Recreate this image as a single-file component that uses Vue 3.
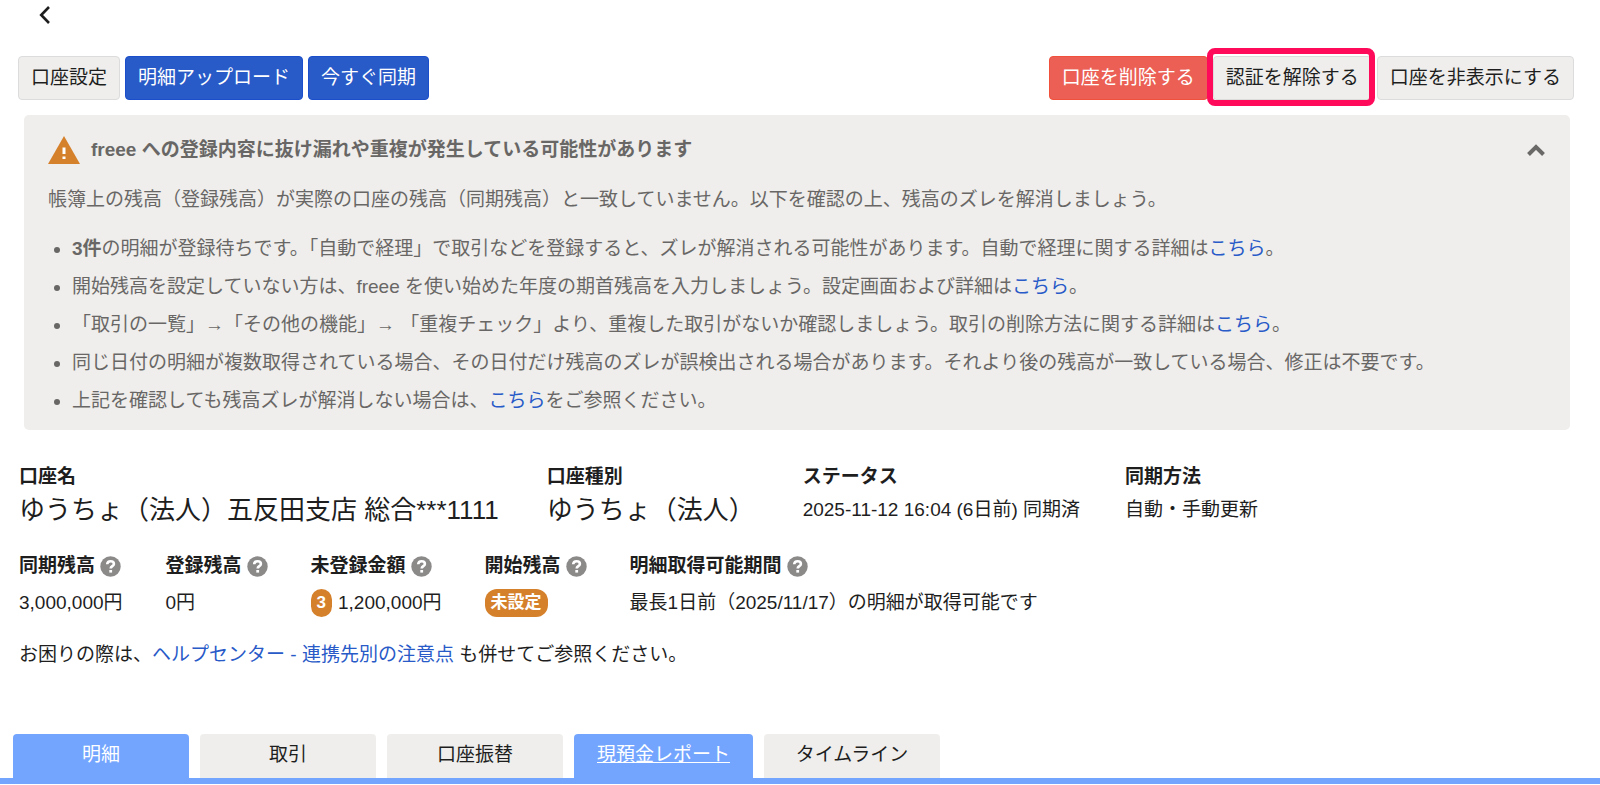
<script setup>
import { ref } from 'vue'

const open = ref(true)

const tabs = [
  { label: '明細', active: true },
  { label: '取引' },
  { label: '口座振替' },
  { label: '現預金レポート', active: true, hovered: true },
  { label: 'タイムライン' },
]

const balances = [
  { label: '同期残高', value: '3,000,000円' },
  { label: '登録残高', value: '0円' },
  { label: '未登録金額', count: '3', value: '1,200,000円' },
  { label: '開始残高', badge: '未設定' },
  { label: '明細取得可能期間', value: '最長1日前（2025/11/17）の明細が取得可能です' },
]
</script>

<template>
  <div class="page" lang="ja">
    <header class="top">
      <button class="icon-button" type="button" aria-label="戻る">
        <svg width="12" height="18" viewBox="0 0 12 18" fill="none" stroke="#1e1e1e" stroke-width="2.600">
          <path d="M10 1 2.200 9 10 17" />
        </svg>
      </button>
    </header>

    <div class="toolbar">
      <div class="group">
        <button class="btn" type="button">口座設定</button>
        <button class="btn primary" type="button">明細アップロード</button>
        <button class="btn primary" type="button">今すぐ同期</button>
      </div>
      <div class="group">
        <button class="btn danger" type="button">口座を削除する</button>
        <div class="marked">
          <button class="btn" type="button">認証を解除する</button>
        </div>
        <button class="btn" type="button">口座を非表示にする</button>
      </div>
    </div>

    <section class="notice">
      <div class="notice-head">
        <svg class="warn" width="32" height="28" viewBox="0 0 32 28">
          <path d="M16 0 32 28H0z" fill="#d5802b" />
          <path d="M14.500 11.500h3v6.500h-3zM14.500 20.500h3v2.500h-3z" fill="#fff" />
        </svg>
        <h2>freee への登録内容に抜け漏れや重複が発生している可能性があります</h2>
        <button class="icon-button" type="button" aria-label="開閉" @click="open = !open">
          <svg width="18" height="12" viewBox="0 0 18 12" fill="none" stroke="#6b6968" stroke-width="4">
            <path d="M1.500 10.500 9 3l7.500 7.500" />
          </svg>
        </button>
      </div>
      <template v-if="open">
        <p>帳簿上の残高（登録残高）が実際の口座の残高（同期残高）と一致していません。以下を確認の上、残高のズレを解消しましょう。</p>
        <ul>
          <li><b>3件</b>の明細が登録待ちです。「自動で経理」で取引などを登録すると、ズレが解消される可能性があります。自動で経理に関する詳細は<a href="#">こちら</a>。</li>
          <li>開始残高を設定していない方は、freee を使い始めた年度の期首残高を入力しましょう。設定画面および詳細は<a href="#">こちら</a>。</li>
          <li>「取引の一覧」→「その他の機能」→ 「重複チェック」より、重複した取引がないか確認しましょう。取引の削除方法に関する詳細は<a href="#">こちら</a>。</li>
          <li>同じ日付の明細が複数取得されている場合、その日付だけ残高のズレが誤検出される場合があります。それより後の残高が一致している場合、修正は不要です。</li>
          <li>上記を確認しても残高ズレが解消しない場合は、<a href="#">こちら</a>をご参照ください。</li>
        </ul>
      </template>
    </section>

    <dl class="facts">
      <div>
        <dt>口座名</dt>
        <dd class="large">ゆうちょ（法人）五反田支店 総合***1111</dd>
      </div>
      <div>
        <dt>口座種別</dt>
        <dd class="large">ゆうちょ（法人）</dd>
      </div>
      <div>
        <dt>ステータス</dt>
        <dd>2025-11-12 16:04 (6日前) 同期済</dd>
      </div>
      <div>
        <dt>同期方法</dt>
        <dd>自動・手動更新</dd>
      </div>
    </dl>

    <dl class="facts balances">
      <div v-for="item in balances" :key="item.label">
        <dt>
          {{ item.label }}
          <svg width="21" height="21" viewBox="0 0 21 21">
            <circle cx="10.500" cy="10.500" r="10.200" fill="#8c8989" />
            <path d="M7.200 8.300c.1-2 1.500-3.100 3.400-3.100s3.300 1.100 3.300 2.700c0 2.200-3.200 2.300-3.200 4.500" fill="none" stroke="#fff" stroke-width="2.600" />
            <path d="M9.300 14h2.800v2.600H9.300z" fill="#fff" />
          </svg>
        </dt>
        <dd>
          <span v-if="item.count" class="badge">{{ item.count }}</span>
          <span v-if="item.badge" class="badge">{{ item.badge }}</span>
          <span v-if="item.value">{{ item.value }}</span>
        </dd>
      </div>
    </dl>

    <p class="help">お困りの際は、<a href="#">ヘルプセンター - 連携先別の注意点</a> も併せてご参照ください。</p>

    <nav class="tabs">
      <button
        v-for="tab in tabs"
        :key="tab.label"
        type="button"
        :class="{ active: tab.active, hovered: tab.hovered }"
      >{{ tab.label }}</button>
    </nav>
  </div>
</template>

<style>
body {
  margin: 0;
  background: #fff;
}
</style>

<style scoped>
.page {
  font-family: "Liberation Sans", "Noto Sans CJK JP", sans-serif;
  font-size: 19px;
  line-height: 28px;
  color: #1e1e1e;
}

button {
  font: inherit;
  color: inherit;
  cursor: pointer;
}

a {
  color: #285ac8;
  text-decoration: none;
}

h2,
p,
ul,
dl,
dd {
  margin: 0;
}

.icon-button {
  display: flex;
  padding: 0;
  border: 0;
  background: none;
}

.top {
  padding: 6px 39px 32px;
}

.toolbar {
  display: flex;
  justify-content: space-between;
  padding: 0 26px 0 18px;
}

.group {
  display: flex;
  gap: 5px;
}

.btn {
  padding: 7px 12px;
  border: 1px solid #dcdcdc;
  border-radius: 4px;
  background: #efeeec;
  white-space: nowrap;
}

.primary {
  border-color: #1a4ecb;
  background: #285ac8;
  color: #fff;
}

.danger {
  border-color: #f0503c;
  background: #eb5f55;
  color: #fff;
}

.marked {
  position: relative;
}

.marked::after {
  content: "";
  position: absolute;
  inset: -8px -3px -6px -6px;
  border: 6px solid #ff0a5a;
  border-radius: 8px;
  pointer-events: none;
}

.notice {
  margin: 15px 30px 0 24px;
  padding: 21px 25px 10px 24px;
  border-radius: 5px;
  background: #efeeec;
  color: #696766;
}

.notice-head {
  display: flex;
  align-items: center;
  gap: 11px;
  margin-bottom: 22px;
}

.notice-head h2 {
  flex: 1;
  font-size: 19px;
  font-weight: bold;
}

.notice ul {
  margin-top: 16px;
  padding-left: 24px;
}

.notice li {
  line-height: 38px;
}

.facts {
  display: flex;
  flex-wrap: wrap;
  gap: 45px;
  padding: 33px 19px 0;
}

.facts dt {
  display: flex;
  align-items: center;
  gap: 5px;
  font-weight: bold;
}

.facts dd {
  display: flex;
  align-items: center;
  gap: 6px;
  height: 38px;
}

.facts .large {
  padding-right: 3px;
  font-size: 26px;
}

.balances {
  gap: 43px;
  padding-top: 23px;
}

.balances dd {
  height: 46px;
}

.badge {
  padding: 0 6px;
  border-radius: 12px;
  background: #d5802b;
  color: #fff;
  font-size: 17px;
  font-weight: bold;
}

.help {
  padding: 15px 19px 0;
}

.tabs {
  display: flex;
  gap: 11px;
  margin-top: 65px;
  padding-left: 13px;
  border-bottom: 6px solid #73a5ff;
}

.tabs button {
  min-width: 176px;
  padding: 7px 23px 9px;
  border: 0;
  border-radius: 4px 4px 0 0;
  background: #efeeec;
}

.tabs .active {
  background: #73a5ff;
  color: #fff;
}

.tabs .hovered {
  text-decoration: underline;
}
</style>
